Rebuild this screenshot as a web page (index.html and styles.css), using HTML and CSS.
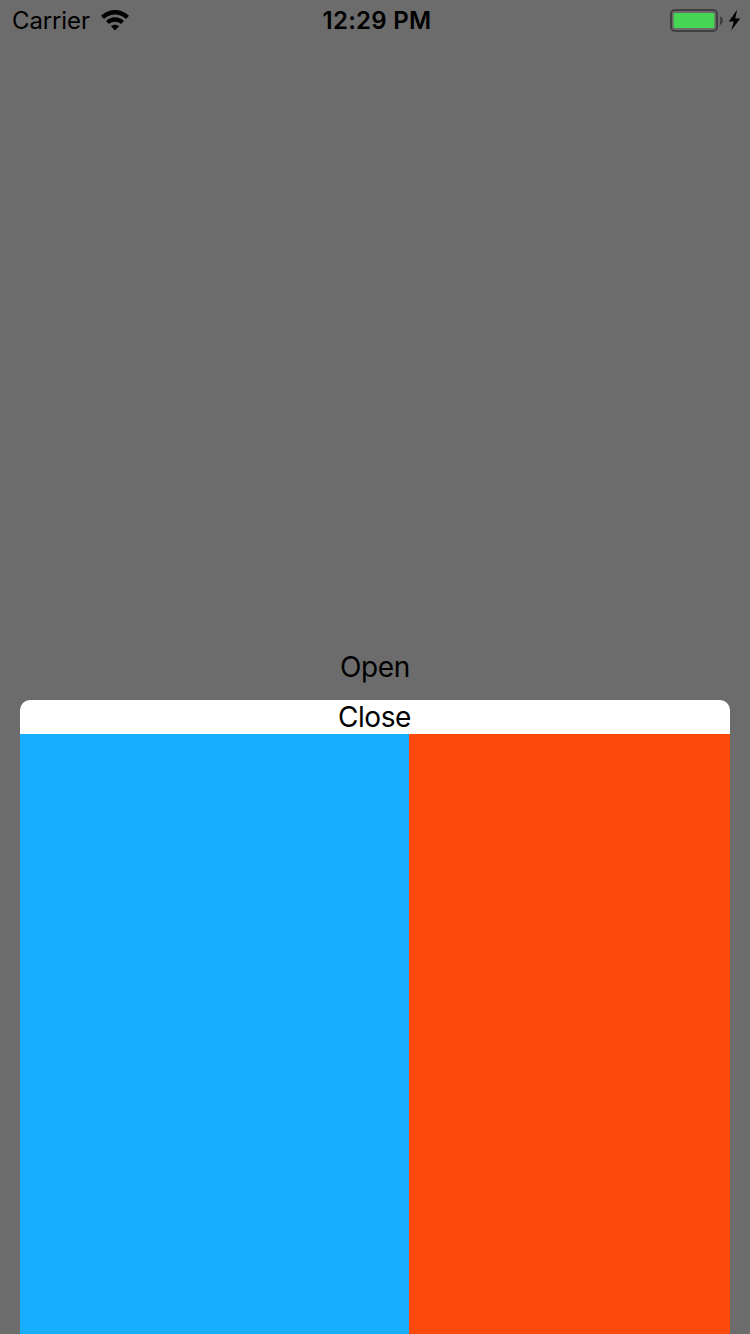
FILE: index.html
```html
<!DOCTYPE html>
<html lang="en">
<head>
<meta charset="utf-8">
<title>Sheet</title>
<link rel="stylesheet" href="styles.css">
</head>
<body>
<div class="screen">
  <header class="status">
    <div class="status-left">
      <span class="carrier">Carrier</span>
      <svg class="wifi" width="28" height="21" viewBox="0 0 28 21"><path d="M0 5.8C8-1.9 20-1.9 28 5.8L25 9C18.8 3 9.2 3 3 9Z"/><path d="M5 10.9C10.2 6 17.8 6 23 10.9L20 14.1C16.4 10.9 11.6 10.9 8 14.1Z"/><path d="M10 16.2C12.2 14.2 15.8 14.2 18 16.2L14 20.4Z"/></svg>
    </div>
    <span class="time">12:29 PM</span>
    <svg class="battery" width="72" height="24" viewBox="0 0 72 24"><rect x="1" y="1" width="46" height="21" rx="4" fill="none" stroke="#3f3f3f" stroke-width="2"/><rect x="3.7" y="4" width="40.6" height="15" rx="1.2" fill="#45d653"/><path d="M50 7.3C53.8 8.5 53.8 14.8 50 16Z" fill="#3f3f3f"/><path d="M67.2 .8L58.8 12.6H63.8L61.2 21.5L70.2 9.4H65.2Z"/></svg>
  </header>
  <main class="content"><span class="open">Open</span></main>
  <section class="sheet">
    <div class="close">Close</div>
    <div class="panels"><div class="blue"></div><div class="orange"></div></div>
  </section>
</div>
</body>
</html>
```
FILE: styles.css
```css
body { margin: 0; }
.screen {
  display: flex;
  flex-direction: column;
  height: 1334px;
  background: #6c6c6c;
  color: #000;
  font-family: Inter, sans-serif;
  overflow: hidden;
}
.status {
  display: grid;
  grid-template-columns: 1fr auto 1fr;
  align-items: center;
  height: 40px;
  padding: 1px 8px 0 12px;
  font-size: 24px;
}
.status-left { display: flex; align-items: center; gap: 12px; }
.carrier { width: 77px; padding-bottom: 2px; letter-spacing: -0.12px; }
.wifi { margin-top: -1px; }
.time { padding-bottom: 2px; font-weight: 600; letter-spacing: 0.3px; }
.battery { justify-self: end; }
.content {
  display: flex;
  flex: 1;
  align-items: flex-end;
  justify-content: center;
  padding-bottom: 16px;
}
.open, .close { font-size: 28px; line-height: 34px; letter-spacing: -0.4px; }
.sheet {
  display: flex;
  flex-direction: column;
  height: 634px;
  margin: 0 20px;
  border-radius: 10px 10px 0 0;
  overflow: hidden;
  background: #fff;
}
.close { padding-right: 1px; text-align: center; }
.panels { display: flex; flex: 1; }
.blue { width: 389px; background: #17aeff; }
.orange { flex: 1; background: #fd4a0a; }
```
